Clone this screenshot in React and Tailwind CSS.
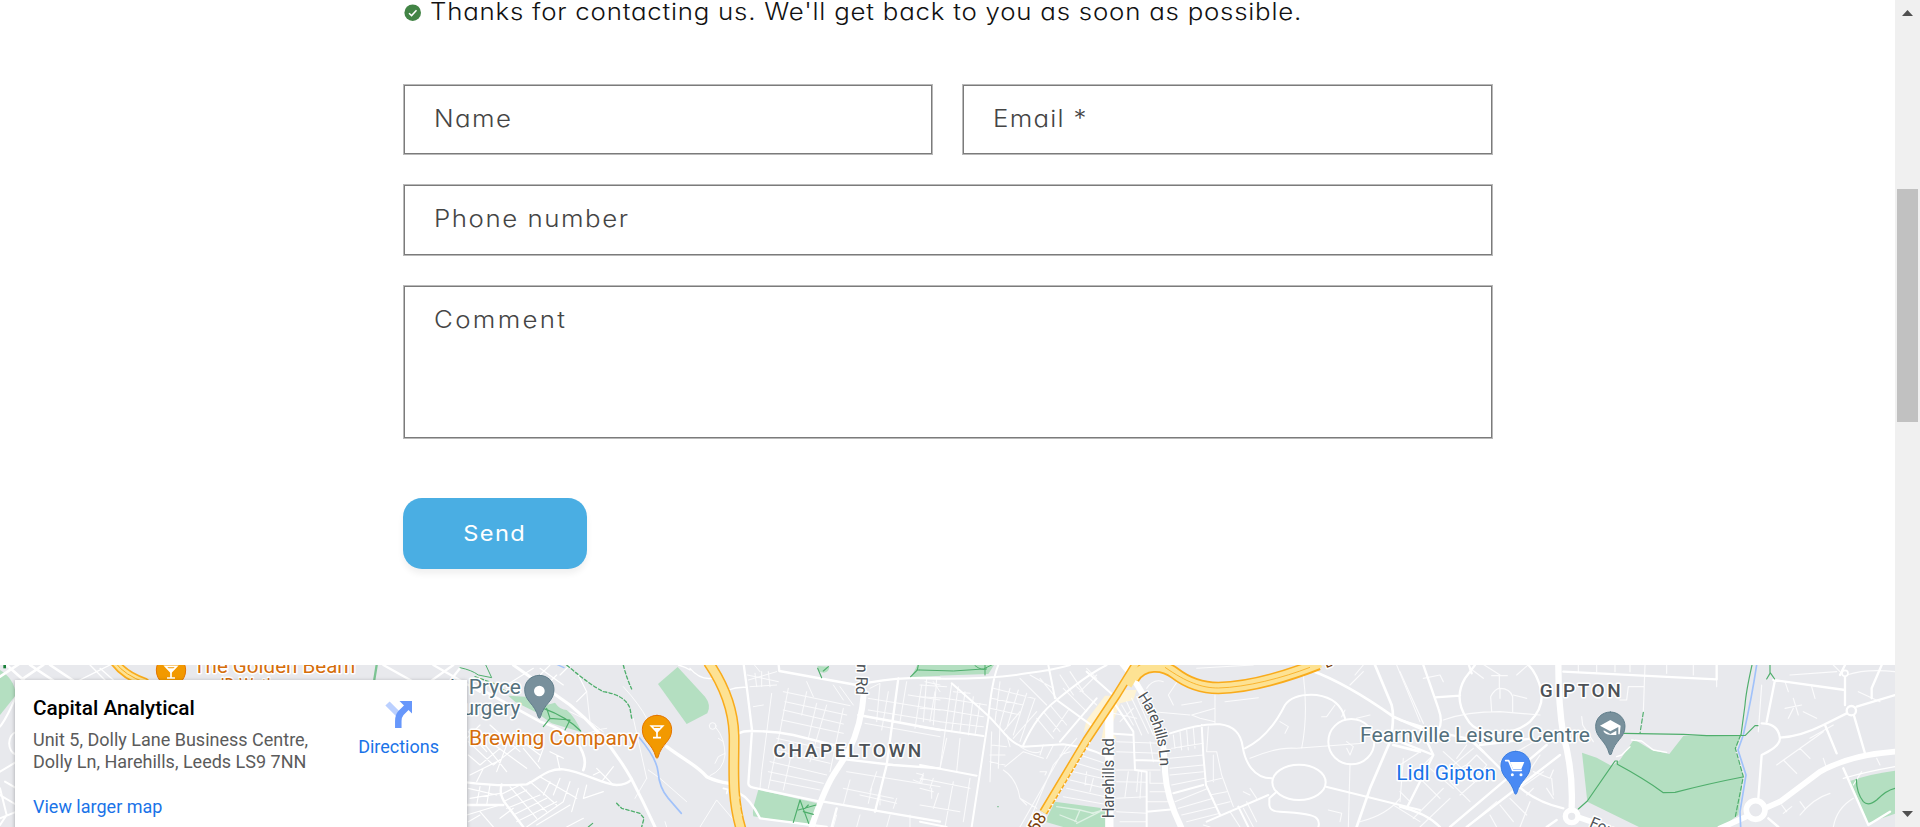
import React from "react";

const formFont =
  "font-['Inter','Lato',sans-serif] font-light [font-feature-settings:'cv11','ss03'] whitespace-nowrap";

function Field({ label, className, textClass }) {
  return (
    <div
      className={
        "border border-[#b9b9b9] shadow-[inset_0_0_0_1px_#7b7b7b] bg-white pl-[30px] text-[23.5px] text-[#454545] " +
        formFont +
        " " +
        className
      }
    >
      <span className={"mt-[19px] block w-fit origin-left scale-x-110 leading-[30px] " + textClass}>{label}</span>
    </div>
  );
}

function Pin({ x, y, fill, edge, children }) {
  return (
    <g transform={`translate(${x} ${y})`}>
      <path
        d="M0 -129 C-26 -129 -44 -109 -44 -86 C-44 -50 -14 -46 -3 -3 Q0 3 3 -3 C14 -46 44 -50 44 -86 C44 -109 26 -129 0 -129Z"
        fill={fill}
        stroke={edge}
        strokeWidth="3"
      />
      {children}
    </g>
  );
}

function Label({ x, y, w, size = 61, fill, weight = 400, children, transform, halo = 9 }) {
  return (
    <text
      x={x}
      y={y}
      textLength={w}
      lengthAdjust="spacingAndGlyphs"
      fontSize={size}
      fontWeight={weight}
      fill={fill}
      stroke="#fff"
      strokeWidth={halo}
      strokeLinejoin="round"
      transform={transform}
      style={{ paintOrder: "stroke" }}
    >
      {children}
    </text>
  );
}

const glass = (
  <g fill="none" stroke="#fff">
    <path d="M-17 -97 H17 L0 -79Z" strokeWidth="5" strokeLinejoin="miter" />
    <path d="M-10 -91 H10 L0 -79Z" fill="#fff" stroke="none" />
    <path d="M0 -80 V-64 M-12 -62 H12" strokeWidth="5" strokeLinecap="butt" />
  </g>
);

function MapArt() {
  return (
    <svg
      width="1895"
      height="162"
      viewBox="0 0 1895 162"
      className="block font-['Roboto',sans-serif]"
      fill="none"
      strokeLinecap="round"
      strokeLinejoin="round"
    >
      <rect width="1895" height="162" fill="#e8e9ed" />

      {/* west edge */}
      <g transform="translate(0 -10) scale(.33333)" stroke="#fff">
        <path d="M0 45 C25 60 45 85 48 120 L0 180Z" fill="#b4dfc1" stroke="none" />
        <path d="M20 30 L110 110 M60 25 L0 65 M70 70 L130 30 M90 30 L180 90 M150 30 L240 90" strokeWidth="8" />
        <path d="M50 120 Q20 190 0 215 M50 230 C20 240 20 290 50 300 M0 350 L50 320 M0 420 L50 450 M0 400 L20 480 L0 510 M15 380 L50 400 M0 490 L50 470" strokeWidth="6" />
        <path d="M230 80 L330 30 M270 30 L320 80 M300 40 L340 75" strokeWidth="4" />
        <path d="M1130 30 L1122 80" stroke="#7cc493" strokeWidth="7" />
        <path d="M1300 30 L1440 110 M1290 80 L1360 30 M1340 90 L1380 40 M1150 30 L1240 80" strokeWidth="7" />
        <path d="M345 22 Q375 62 435 82" stroke="#f9ab1b" strokeWidth="28" />
        <path d="M345 22 Q375 62 435 82" stroke="#fde293" strokeWidth="18" />
        <path d="M345 22 Q375 62 435 82" stroke="#f9ab1b" strokeWidth="3" />
        <path d="M14 30 V40" stroke="#188038" strokeWidth="8" strokeLinecap="butt" />
      </g>

      {/* Chapeltown */}
      <g transform="translate(460 -10) scale(.33333)" stroke="#fff">
        <g fill="#b4dfc1" stroke="none">
          <path d="M594 87 L653 36 L735 125 Q755 150 742 175 L680 207Z" />
          <path d="M895 404 L1072 445 L1046 510 L880 484 Q877 470 882 450Z" />
          <path d="M1372 30 H1440 V62 L1353 67Z M1073 33 L1108 35 Q1108 50 1092 53 Q1070 52 1073 33Z" />
          <path d="M145 122 L195 125 L240 155 L285 143 Q300 165 320 165 Q345 185 365 232 L275 205 L225 170 L165 140Z" />
        </g>
        <g strokeWidth="3" stroke="#fbfbfc">
          <path d="M970 110 L1170 152 M975 140 L1160 180 M970 165 L1150 207 M965 195 L1150 235 M950 250 L1130 290 M940 285 L1110 325 M930 320 L1100 360 M925 350 L1090 385 M930 375 L1080 405 M985 100 L960 230 M1040 110 L1025 180 M1070 145 L1045 250 M1100 150 L1050 320 M1150 160 L1110 350 M960 230 L925 400 M1000 270 L970 405" />
          <path d="M1225 130 L1440 165 M1225 165 L1440 200 M1215 205 L1440 245 M1230 100 L1260 85 L1250 200 M1285 110 L1265 225 M1340 80 L1320 200 M1385 90 L1365 220 M1425 110 L1410 200 M1395 80 L1440 90 M1420 80 L1440 110 M1345 120 L1440 135" />
          <path d="M1160 350 L1440 395 M1150 400 L1300 430 M1200 420 L1310 445 M1235 400 L1225 445 M1260 420 V450 M1310 430 L1300 460 M1370 355 L1390 360 L1385 385 L1360 375 M1410 400 L1420 370 M1130 480 L1120 516 M1200 480 L1190 516 M1290 480 L1280 516 M1350 480 V516 M1170 375 L1150 450 M1250 350 L1230 410" />
          <path d="M865 75 L950 50 M862 60 L955 80 M870 95 L950 90 M885 55 L890 95 M905 50 V95 M925 50 L930 95 M880 155 L910 150 M935 115 L905 350 L900 400 M875 20 L900 50 M1040 80 L1060 125 M1120 90 L1150 135 M1140 95 L1180 150" />
          <path d="M490 95 Q540 150 560 190 M565 345 L600 370 L680 440 M560 370 L525 430 M520 190 L560 370 M380 110 L390 200 L430 230 M345 250 Q420 220 440 220 M330 170 L380 195 M720 516 L770 435 L825 500 M620 516 L615 500" />
          <circle cx="758" cy="213" r="10" />
          <path d="M768 218 Q795 250 795 300 Q790 345 750 362 M765 325 L775 305 L795 295 M775 250 L790 260" />
        </g>
        <g strokeWidth="3.5">
          <path d="M25 260 L100 330 L200 250 M60 250 L140 350 M25 300 L60 330 L120 280 M90 260 L200 340 M60 210 L20 250 M90 210 L180 290 M30 360 L110 320 M140 270 L110 350 M190 280 L240 340 M160 240 L240 300 M25 230 L80 290 M70 340 L50 380 M250 280 L235 320 M290 300 L300 345 M270 290 L310 310" />
          <path d="M25 400 L110 420 M30 430 L120 415 M60 395 L50 450 M90 390 L80 450 M20 480 L120 450 M60 470 L100 516 M25 500 L60 480 M120 420 L180 390 M130 440 L200 405 M150 395 L230 490 M180 390 L260 470 M210 380 L290 450 M240 365 L350 430 M140 460 L240 420 M160 480 L260 430 M170 500 L290 440 M200 516 L310 440 M230 510 L330 450 M120 490 L160 460 M270 380 L250 420 M300 370 L280 420 M330 380 L310 440 M355 400 L335 470 M380 390 L370 430 M320 516 L370 490 M410 340 L460 390 M425 380 L460 335 M400 360 L420 350 M370 430 L430 410" />
          <path d="M290 60 L240 110 M240 40 L310 90 M330 30 L300 60 M140 90 L220 40 M270 30 L240 60 M355 60 L380 110 L350 140" />
        </g>
        <g strokeWidth="7">
          <path d="M20 382 Q120 395 200 388 C240 370 260 340 310 343 C370 350 430 390 470 390 Q500 390 515 373 M125 388 Q115 420 140 450 L190 516 M20 450 L130 450" />
          <path d="M160 30 L330 150 Q440 240 515 373 Q550 440 585 516" strokeWidth="9" />
          <path d="M40 90 L240 200 Q320 225 350 260 Q385 310 370 345" strokeWidth="8" />
          <path d="M620 275 C680 320 710 330 740 365 Q770 380 808 385" strokeWidth="10" />
          <path d="M835 235 Q850 228 870 228 Q940 228 1000 240 L1140 275 M850 20 L862 110 L876 225 L865 385 Q865 395 880 398 L1080 440 M955 20 L958 48 L1190 90 L1230 82 Q1330 65 1440 70 M838 415 Q870 430 900 490 L1100 516 M1090 440 L1440 500 M1130 310 L1300 330 L1440 340 M1195 180 L1440 225 M1315 70 L1280 330 L1245 470 M1130 460 L1115 516" />
          <path d="M690 40 Q720 75 755 70 M655 30 Q675 35 690 45 M805 105 Q830 95 860 97" strokeWidth="4" />
        </g>
        <path d="M1212 110 Q1205 210 1165 290 Q1140 330 1120 360 Q1090 410 1055 516" strokeWidth="18" />
        <g stroke="#4fae6c" strokeWidth="4">
          <path d="M0 38 Q35 45 55 60 L95 68 L75 25" strokeWidth="3" />
          <path d="M320 30 Q390 90 430 110 Q495 120 510 160 L515 190 M490 30 Q500 70 515 102 M470 445 L485 460 L540 475 L552 490 L545 516 M45 65 L100 85 L140 110" strokeDasharray="10 7" />
          <path d="M260 160 L270 190 L250 215 M270 190 L330 195 L315 225 M250 160 Q320 185 362 228 M1020 435 L1000 502 M1020 435 L1046 505 M1015 465 L1068 450 M1030 470 L1060 478 M1045 450 L1035 460 M1352 65 L1372 45 L1375 30 M1370 45 H1440 M1073 40 L1085 68 M1090 48 L1105 35 M385 516 L398 505" strokeWidth="3.5" />
        </g>
        <path d="M290 28 L312 38" stroke="#a1c2fa" strokeWidth="4" />
        <path d="M537 247 Q590 310 594 350 Q598 400 625 430 L664 475" stroke="#a1c2fa" strokeWidth="5" />
        <path d="M790 400 L803 403 L800 415" strokeWidth="5" />
        <g strokeLinecap="butt">
          <path d="M745 22 C795 95 820 170 822 240 C824 320 812 420 843 522" stroke="#f9ab1b" strokeWidth="33" />
          <path d="M745 22 C795 95 820 170 822 240 C824 320 812 420 843 522" stroke="#fde293" strokeWidth="24" />
          <path d="M835 425 Q838 470 850 500" stroke="#fde293" strokeWidth="7" strokeDasharray="6 20" />
        </g>
      </g>

      {/* Harehills */}
      <g transform="translate(920 -10) scale(.33333)" stroke="#fff">
        <g stroke="none">
          <path d="M0 30 H222 L205 57 L0 64Z" fill="#b4dfc1" />
          <path d="M405 440 L565 462 V516 H430 L375 500Z" fill="#b4dfc1" />
          <path d="M555 122 L580 122 L520 205 L490 235 L500 195Z M600 105 L650 105 L640 135 L600 145 L570 225 L590 250 L545 250 L560 170Z" fill="#fef3d4" />
        </g>
        <g strokeWidth="3.2" stroke="#fbfbfc">
          <path d="M0 90 L80 95 M0 125 L75 130 M0 160 L70 165 M20 70 L10 200 M50 70 L40 210 M95 85 L60 340 M115 95 L95 230 M135 110 L120 230 M160 125 L145 240 M180 145 L165 240 M75 130 L200 150 M70 165 L190 185 M60 200 L190 215 M100 110 L150 115" />
          <path d="M220 100 L340 130 M215 130 L310 150 M210 160 L300 180 M240 80 L225 200 M270 100 L240 210 M295 105 L260 220 M320 115 L280 240 M345 130 L300 260 M250 230 L300 170 M280 250 L350 170 M360 70 L410 130 M300 70 L380 150 M330 60 L400 100 M390 150 L440 210 M370 170 L420 230 M350 190 L400 250 M420 60 L460 120 M450 50 L490 110 M470 95 L530 150 M430 100 L500 170 M500 40 L530 70 M530 60 L480 110 M445 165 L400 230" />
          <path d="M0 370 L150 400 M0 400 L40 410 M35 400 V430 M55 415 L40 460 M0 450 L120 470 M150 370 L130 500 M100 380 L75 516 M10 355 L0 380 M80 250 L60 340 M120 250 L110 350 M215 230 L210 380 M240 210 L235 340 M215 270 L260 275 M210 300 L255 300 M210 320 L255 330 M260 240 L270 275" />
          <path d="M250 345 Q290 370 300 430 L320 450 M255 335 L310 290 L370 310 M300 275 Q340 300 360 290 M440 270 L300 516 M470 250 L400 330 L320 516 M360 350 L380 350 L375 360 M300 430 L350 460 M420 300 L450 290 M370 270 L360 300 M400 270 L380 310" />
          <path d="M480 300 L555 325 M470 325 L555 350 M460 350 L555 372 M450 375 L555 400 M440 400 L555 425 M430 425 L555 448 M500 350 L495 390 M520 370 L510 410 M590 260 L720 265 M590 290 L720 295 M590 345 H720 M590 380 L680 382 M590 430 L680 425 M625 350 L615 425 M655 350 L650 410 M590 470 L680 475 M600 500 H680 M690 350 V385 H730 M690 410 H740 M680 440 H745 M665 350 L660 430" />
          <path d="M605 150 L640 210 M620 140 L665 240 M635 130 L685 235 M650 125 L700 240 M580 175 L650 190 M600 200 L640 160 M690 260 L700 320" />
          <path d="M760 240 L765 280 M780 230 L785 285 M800 225 L805 285 M820 220 L825 280 M755 280 L850 265 M750 310 L850 300 M750 340 L850 330 M750 360 L850 350 M755 390 L855 370 M765 440 L865 400 M775 460 L880 430 M785 480 L890 455 M800 500 L900 475 M865 215 L860 290 L890 290 L905 360 L940 455 M860 380 L905 370 M880 300 L880 380 M870 420 L920 410 M890 450 L930 440" />
          <path d="M775 75 L745 120 L760 150 M815 180 L885 160 L885 200 L840 190 L815 180 M885 120 V205 M915 140 L1015 128 M785 150 L845 140 M700 170 L810 180 M680 100 Q700 70 730 80 M830 40 L1000 30 M1150 60 Q1165 180 1145 280 M990 310 Q1070 275 1130 280 L1330 265 M1080 200 L1105 215 L1095 235 M1245 150 L1220 185 L1205 185 M1275 165 L1265 185" />
          <path d="M1280 260 L1300 275 L1290 300 L1280 280 M1290 330 L1285 516 M1310 190 L1350 180 M1305 60 L1330 30 M1430 30 L1500 200 M1330 50 L1290 90 M1225 465 L1265 475 L1260 500 M1320 500 Q1400 480 1440 430 M1420 450 L1500 500 M1450 310 L1440 440 M990 400 L1010 430 M970 410 L990 420" />
          <path d="M930 470 L960 516 M970 460 L1000 516 M850 510 L870 516 M980 440 L1010 500" />
        </g>
        <g strokeWidth="6">
          <path d="M0 70 Q200 75 320 55 Q400 45 450 30 M235 30 Q215 80 205 190 L155 516 M95 85 L180 160 Q210 185 240 220 Q280 270 310 275 L430 268 Q500 275 560 305 M0 215 L190 243 M0 330 L170 362 M310 270 Q350 180 410 135 Q500 60 560 30 M385 30 L405 130 M410 135 L520 215 M500 50 L590 130 M420 260 L530 130 M0 500 L80 516" />
          <path d="M580 140 L640 230 L645 345 L680 350 V516 M645 315 L740 318 M640 240 L560 235 M750 235 Q840 205 900 208 Q960 215 968 275 C975 320 1000 370 1055 370 M845 210 L850 300 L858 390 L900 480 M760 415 L850 390 M975 280 C1040 250 1080 180 1095 150 Q1120 115 1190 120 Q1260 130 1275 190 M680 470 L760 463" />
          <ellipse cx="1137" cy="382" rx="80" ry="53" />
          <ellipse cx="1294" cy="260" rx="69" ry="68" />
          <path d="M1070 410 L1048 430 V450 Q1050 470 1080 470 Q1180 475 1190 490 Q1200 500 1195 516 M860 500 L1045 420 M955 455 L985 516 M1218 395 L1340 425 L1500 465" />
          <path d="M1170 45 Q1280 85 1420 185 L1500 220 M1365 30 L1415 150 Q1425 190 1410 260 L1350 400 L1310 516 M1420 270 L1500 290" strokeWidth="8" />
        </g>
        <path d="M568 160 V516" strokeWidth="25" strokeLinecap="butt" />
        <path d="M640 70 Q670 120 700 170 Q735 250 735 350 Q740 430 785 520" strokeWidth="18" />
        <path d="M610 25 L640 60" strokeWidth="25" />
        <path d="M0 45 L100 48 L190 42 L215 30 M165 32 Q185 48 200 42 M195 30 V60" stroke="#4fae6c" strokeWidth="3" />
        <path d="M410 455 L480 465 L520 475 M480 465 L465 500 M420 480 L470 500 M515 475 L560 462 M470 505 L540 470" strokeWidth="4" stroke="#def1e4" />
        <g strokeLinecap="butt">
          <path d="M655 15 L590 120 L500 255 L370 472" stroke="#f9ab1b" strokeWidth="26" />
          <path d="M640 70 C670 22 730 28 765 55 C800 82 845 99 895 99 C980 97 1090 68 1195 27" stroke="#f9ab1b" strokeWidth="38" />
          <path d="M655 15 L590 120 L500 255 L370 472" stroke="#fde293" strokeWidth="17" />
          <path d="M622 90 L652 40" stroke="#fde293" strokeWidth="28" />
          <path d="M640 70 C670 22 730 28 765 55 C800 82 845 99 895 99 C980 97 1090 68 1201 24" stroke="#fde293" strokeWidth="28" />
          <path d="M735 37 C800 82 845 99 895 99 C980 97 1090 68 1170 37" stroke="#f9ab1b" strokeWidth="2.5" />
          <path d="M510 262 L385 468" stroke="#fff" strokeWidth="5" strokeDasharray="5 13" />
        </g>
        <circle cx="234" cy="455" r="2" fill="#4fae6c" stroke="none" />
      </g>

      {/* Gipton */}
      <g transform="translate(1400 -10) scale(.33333)" stroke="#fff">
        <g fill="#b4dfc1" stroke="none">
          <path d="M546 293 L590 308 L635 333 L660 315 L702 253 L755 285 L808 297 L850 243 L1022 240 L1006 290 L1030 360 L1015 480 L960 520 H725 L562 440Z" />
          <path d="M1350 378 Q1420 355 1488 347 V475 L1404 504Z" />
        </g>
        <g strokeWidth="3.5" stroke="#fbfbfc">
          <path d="M0 50 L70 205 M70 70 L120 60 L130 80 M275 62 H322 M298 62 V100 M275 170 L272 125 Q285 100 300 100 Q330 100 338 125 V170 M300 100 V130 M130 195 Q200 170 300 170 L420 180 M245 25 L300 60 M390 25 L350 60 M210 40 L250 70 M380 130 L340 120 M735 30 L730 170 M660 135 L680 135 L685 95 H730 M590 30 V50 M535 30 V50 M645 30 V50 M690 30 V50 M800 30 V55 M880 30 V60 M950 70 V95 M545 185 L548 210 L580 260" />
          <path d="M130 290 L230 380 M160 330 L220 280 M150 380 L210 440 M180 420 L260 350 M200 270 L170 310 M200 330 L230 300 L260 330 L220 380 L180 340Z M90 340 L160 400 M60 370 L120 430 M100 300 L40 360 M0 330 L60 290 M130 400 L40 490 M150 430 L60 516 M300 320 L420 250 M360 400 L430 350 M380 420 L400 400 M400 350 L450 370 L460 345 M380 360 L420 300 M440 400 L460 430 M455 370 L460 420 M300 450 L340 500 M330 430 L380 480 M270 480 L290 516 M200 516 L290 440 M390 440 L360 516 M0 410 L30 440" />
          <path d="M1155 160 L1205 150 M1180 130 L1195 180 M1165 190 L1180 160 M1085 90 L1075 230 M1235 95 L1245 130 M1155 80 L1165 110 M1130 330 Q1200 280 1270 230 M1150 315 L1190 355 M1200 280 L1230 310 M1230 250 L1300 210 M1210 170 L1250 190 M1150 475 L1175 455 M1145 450 L1160 470 M1200 440 L1215 460 M1200 480 Q1240 430 1290 415 M1300 516 Q1310 460 1360 430 M1340 60 Q1400 40 1485 50 M1300 30 L1320 50 M1385 350 L1360 390 M1270 310 L1280 340 M1430 310 L1440 330 M1170 60 L1310 50 M1375 110 L1440 140" />
        </g>
        <g strokeWidth="7">
          <path d="M70 30 L115 160 Q130 200 115 225 M195 70 Q160 130 200 190 Q215 220 245 225 Q330 250 390 200 Q430 160 425 110 Q410 50 380 25 M195 70 L225 30 M205 25 L215 55 M105 127 L180 122 M0 195 L130 235 L200 250 M0 260 L100 300 M240 270 L400 250 M60 215 L100 300 L20 460 M205 250 L250 290" />
          <path d="M225 265 L340 380 Q400 440 490 460 M440 270 L150 516 M480 300 L200 516" />
          <path d="M490 50 L950 73 V30 M0 455 Q80 475 120 516 M470 495 L440 516 M1120 75 L1335 105 M1125 75 L1100 200 M1085 205 Q1135 205 1140 250 Q1140 275 1085 300 L1075 430 M1140 248 Q1200 245 1270 210 L1340 175 M1370 155 L1485 120 M1335 60 V150 M1335 30 L1320 60 M1445 30 L1415 100 V130 M1360 175 L1395 295 M1275 210 L1310 295 M1330 340 L1405 510 M1470 470 L1405 510 M1105 490 L1135 516" />
          <path d="M1330 370 Q1400 350 1485 335" strokeWidth="4" />
          <path d="M695 255 L725 258 L760 285 L800 292 M650 305 L665 300 L690 275" strokeWidth="4" />
        </g>
        <path d="M475 25 Q475 150 490 240 Q520 350 515 455" strokeWidth="19" />
        <path d="M530 485 L620 516 M960 520 L1050 480 L1140 440 L1260 350 Q1350 300 1485 290" strokeWidth="17" />
        <circle cx="515" cy="484" r="19" strokeWidth="16" fill="#e8e9ed" />
        <circle cx="1067" cy="465" r="28" strokeWidth="17" fill="#e8e9ed" />
        <circle cx="1354" cy="167" r="14" strokeWidth="7" fill="#e8e9ed" />
        <circle cx="1335" cy="55" r="9" strokeWidth="5" fill="#e8e9ed" />
        <path d="M1070 30 Q1055 130 1030 240 L1014 285 L1038 360 L1020 470 L1022 516" stroke="#a1c2fa" strokeWidth="5" />
        <g stroke="#4fae6c" strokeWidth="3.5">
          <path d="M1056 30 Q1038 110 1035 150 L1023 240 M672 235 L850 238 L920 242 L1036 241 L1065 212 H1074 M535 462 L562 438 L645 318 L652 318 V328 Q730 370 790 413 L825 412 Q930 385 1028 366 M1110 30 V55 L1100 72 M1110 52 L1124 72 M1369 373 Q1370 415 1390 440 Q1405 455 1430 435 Q1460 405 1485 400" />
          <path d="M1022 240 L1006 280 L1030 365 L1005 490 M730 172 L720 235" strokeDasharray="13 7" />
        </g>
      </g>

      {/* place labels */}
      <g transform="translate(0 -10) scale(.33333)">
        <Pin x={513} y={131} fill="#f29900" edge="#e37400">{glass}</Pin>
        <Label x={580} y={54} w={486} fill="#d56e0c">The Golden Beam</Label>
        <Label x={622} y={115} w={380} fill="#d56e0c">- JD Wetherspoon</Label>
        <Label x={1350} y={117} fill="#54707c">l</Label>
      </g>
      <g transform="translate(460 -10) scale(.33333)">
        <Pin x={238} y={190} fill="#78909c" edge="#607d8b"><circle cy="-82" r="16" fill="#fff" /></Pin>
        <Label x={26} y={118} w={157} fill="#54707c">Pryce</Label>
        <Label x={8} y={180} w={173} fill="#54707c">urgery</Label>
        <Pin x={591} y={310} fill="#f29900" edge="#e37400">{glass}</Pin>
        <Label x={27} y={269} w={508} fill="#d56e0c">Brewing Company</Label>
        <text x="940" y="305" textLength="444" fontSize="57" fontWeight="500" fill="#4d5257" stroke="#fff" strokeWidth="9" style={{ paintOrder: "stroke" }}>
          CHAPELTOWN
        </text>
        <Label x={0} y={0} w={92} size={48} fill="#4d5257" transform="translate(1191 27) rotate(92)">n Rd</Label>
      </g>
      <g transform="translate(920 -10) scale(.33333)">
        <Label x={0} y={0} w={240} size={48} fill="#4d5257" halo={7} transform="translate(583 490) rotate(-90)">Harehills Rd</Label>
        <path id="harehills-lane" d="M652 124 Q720 220 720 340" />
        <text fontSize="46" fill="#4d5257" stroke="#fff" strokeWidth="7" style={{ paintOrder: "stroke" }}>
          <textPath href="#harehills-lane" textLength="224">Harehills Ln</textPath>
        </text>
        <Label x={0} y={0} size={52} fill="#7a3e0a" transform="translate(352 536) rotate(-60)">58</Label>
        <Label x={0} y={0} size={44} fill="#7a3e0a" transform="translate(1218 40) rotate(-20)">B</Label>
      </g>
      <g transform="translate(1400 -10) scale(.33333)">
        <text x="419" y="127" textLength="243" fontSize="57" fontWeight="500" fill="#4d5257" stroke="#fff" strokeWidth="9" style={{ paintOrder: "stroke" }}>
          GIPTON
        </text>
        <Pin x={631} y={300} fill="#78909c" edge="#607d8b">
          <path d="M-31 -88 L0 -105 L31 -88 L28 -62 H24 V-84 L0 -71Z M-20 -74 L0 -63 L18 -73 V-60 L5 -60 Q-12 -60 -20 -70Z" fill="#fff" />
        </Pin>
        <Label x={-120} y={260} w={690} fill="#54707c">Fearnville Leisure Centre</Label>
        <Pin x={347} y={418} fill="#4a8af4" edge="#3b7de0">
          <path d="M-30 -101 H-21 L-9 -72 H17" stroke="#fff" strokeWidth="5" fill="none" />
          <path d="M-17 -97 H26 L17 -76 H-8Z" fill="#fff" />
          <circle cx="-10" cy="-59" r="4.5" fill="#fff" />
          <circle cx="16" cy="-59" r="4.5" fill="#fff" />
        </Pin>
        <Label x={-11} y={376} w={299} fill="#1a73e8">Lidl Gipton</Label>
        <Label x={0} y={0} size={46} fill="#4d5257" transform="translate(566 514) rotate(23)">Foundry</Label>
      </g>
    </svg>
  );
}

function PlaceCard() {
  return (
    <div className="absolute left-[15px] top-[15px] flex h-[170px] w-[452px] justify-between bg-white pl-[18px] pr-[28px] font-['Roboto',sans-serif] shadow-[0_1px_4px_rgba(0,0,0,0.3)]">
      <div className="flex flex-col whitespace-nowrap">
        <h2 className="mt-4 text-[20.8px] leading-6 font-medium text-black">Capital Analytical</h2>
        <p className="mt-[9px] text-[18px] leading-[22px] text-[#5b5b5b]">
          Unit 5, Dolly Lane Business Centre,
          <br />
          Dolly Ln, Harehills, Leeds LS9 7NN
        </p>
        <a className="mt-[23px] text-[18px] leading-[22px] text-[#1a73e8]">View larger map</a>
      </div>
      <div className="flex flex-col items-center">
        <svg width="27" height="27" viewBox="0 0 27 27" className="mt-[21px]" fill="none">
          <path d="M2.5 2.5 L13 13" stroke="#bbd0ff" strokeWidth="6" />
          <path d="M13.3 27 V20 Q13.3 15 16 12 L22 6" stroke="#6797fb" strokeWidth="6.5" />
          <path d="M14.5 0 H27 V12.500Z" fill="#6797fb" />
        </svg>
        <a className="mt-[8px] text-[18px] leading-[22px] text-[#1a73e8]">Directions</a>
      </div>
    </div>
  );
}

export default function App() {
  return (
    <div className="flex h-[827px] w-[1920px] overflow-hidden bg-white">
      <main className="flex w-[1895px] flex-col">
        <form className="ml-[403px] flex h-[665px] w-[1090px] flex-col">
          <div className={"flex h-[84px] items-start text-[23.5px] text-[#121212] " + formFont}>
            <svg width="18" height="18" viewBox="0 0 18 18" className="mt-[4px] ml-[1px] mr-[8px]">
              <circle cx="8.700" cy="8.700" r="8.300" fill="#428445" />
              <path d="M5 9.200 L7.600 11.600 L12.500 6.300" fill="none" stroke="#fff" strokeWidth="1.500" />
            </svg>
            <span className="mt-[-3px] origin-left scale-x-110 leading-[30px] tracking-[0.7px]">
              Thanks for contacting us. We'll get back to you as soon as possible.
            </span>
          </div>
          <div className="flex gap-[29px]">
            <Field label="Name" className="h-[71px] w-[530px]" textClass="tracking-[1.3px]" />
            <Field label="Email *" className="h-[71px] w-[531px]" textClass="tracking-[1.15px]" />
          </div>
          <Field label="Phone number" className="mt-[29px] h-[72px]" textClass="tracking-[1.4px]" />
          <Field label="Comment" className="mt-[29px] h-[154px]" textClass="tracking-[2.1px]" />
          <button
            type="button"
            className="mt-[59px] flex h-[71px] w-[184px] items-center justify-center rounded-[19px] bg-[#4aaee3] font-['Inter','Lato',sans-serif] text-[21.5px] tracking-[1.3px] text-white [font-feature-settings:'cv11'] shadow-[0_5px_6px_rgba(18,18,18,0.06)]"
          >
            <span className="block scale-x-110">Send</span>
          </button>
        </form>
        <section className="relative h-[162px] overflow-hidden">
          <MapArt />
          <PlaceCard />
        </section>
      </main>
      <aside className="flex w-[25px] flex-col items-center justify-between bg-[#f0f0f0]">
        <svg width="11" height="6" className="mt-[10px]">
          <path d="M0 6 L5.500 0 L11 6Z" fill="#505050" />
        </svg>
        <div className="mt-[173px] h-[233px] w-[21px] bg-[#c1c1c1]" />
        <svg width="11" height="6" className="mt-auto mb-[10px]">
          <path d="M0 0 H11 L5.500 6Z" fill="#505050" />
        </svg>
      </aside>
    </div>
  );
}
